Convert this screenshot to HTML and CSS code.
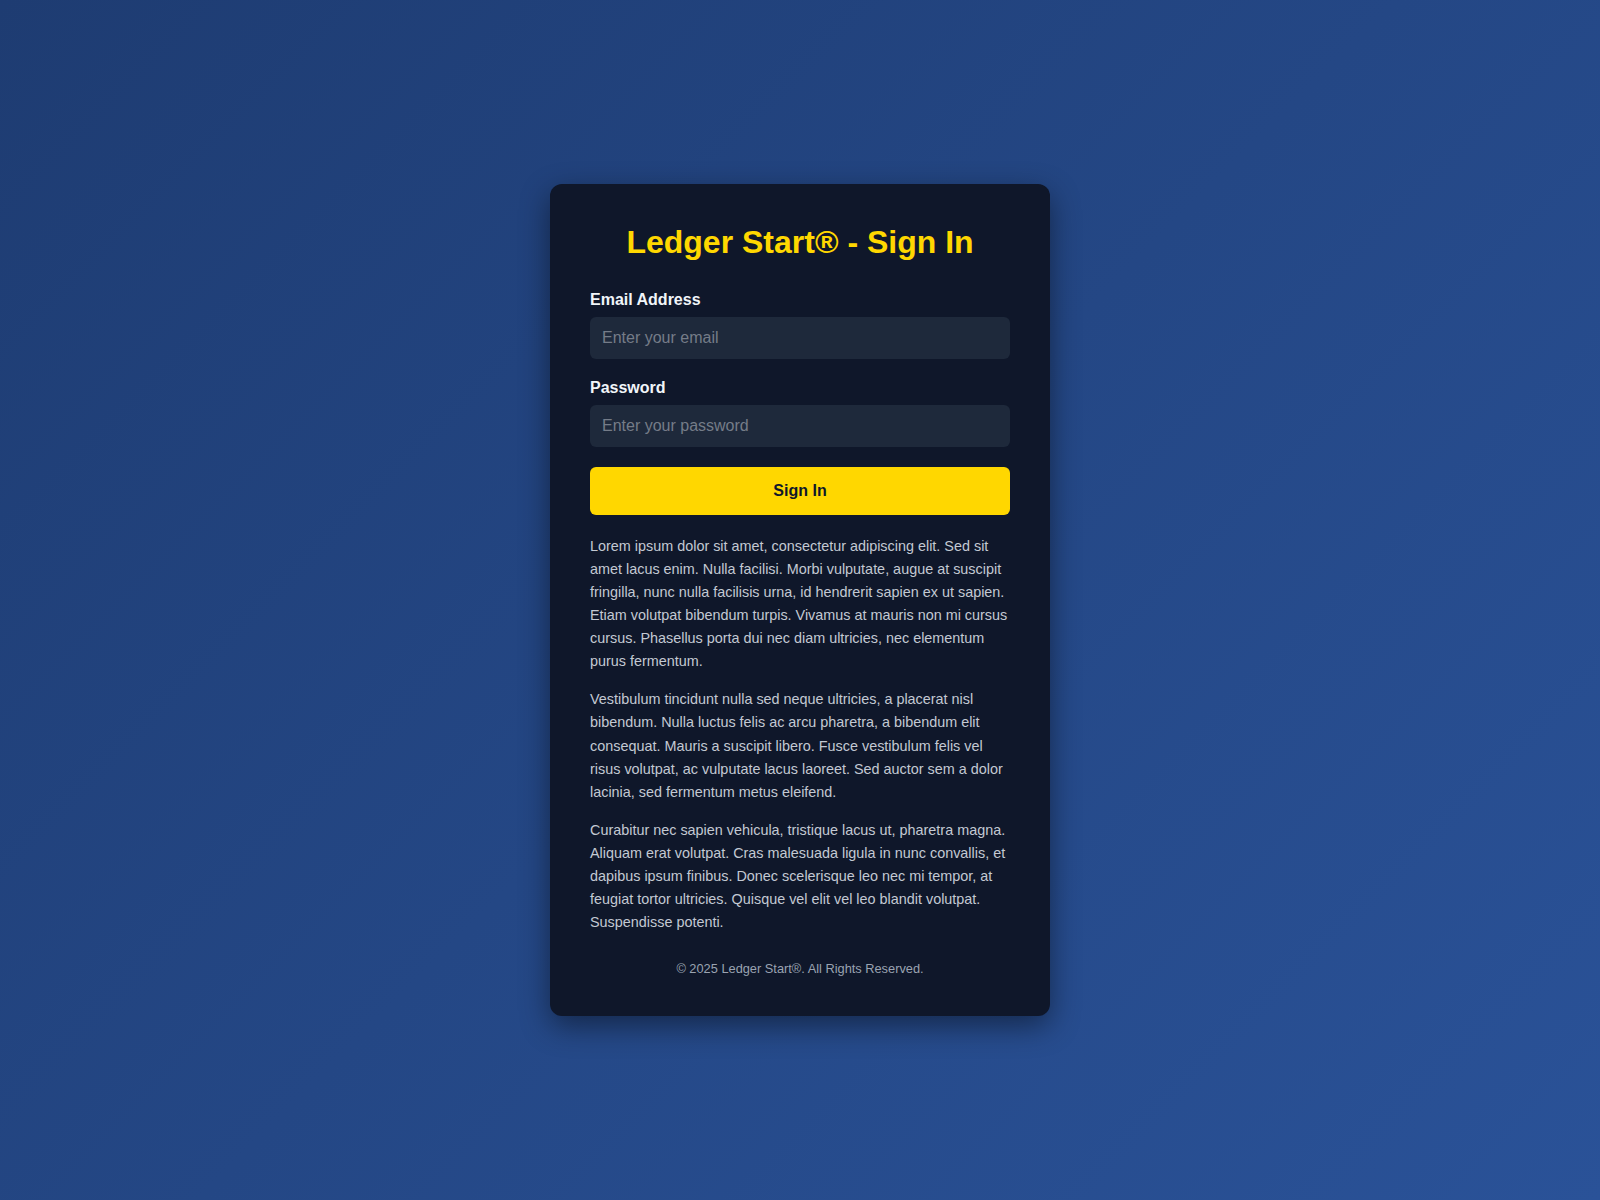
FILE: index.html
```html
<!DOCTYPE html>
<html lang="en">
<head>
    <meta charset="UTF-8">
    <meta name="viewport" content="width=device-width, initial-scale=1.0">
    <title>Ledger Start® - Sign In</title>
    <link rel="stylesheet" href="styles.css">
</head>
<body>
    <div class="login-container">
        <h1>Ledger Start® - Sign In</h1>
        <form class="login-form">
            <div class="form-group">
                <label for="email">Email Address</label>
                <input type="email" id="email" placeholder="Enter your email">
            </div>
            <div class="form-group">
                <label for="password">Password</label>
                <input type="password" id="password" placeholder="Enter your password">
            </div>
            <button type="submit">Sign In</button>
        </form>

        <div class="info-text">
            <p>Lorem ipsum dolor sit amet, consectetur adipiscing elit. Sed sit amet lacus enim. Nulla facilisi. Morbi vulputate, augue at suscipit fringilla, nunc nulla facilisis urna, id hendrerit sapien ex ut sapien. Etiam volutpat bibendum turpis. Vivamus at mauris non mi cursus cursus. Phasellus porta dui nec diam ultricies, nec elementum purus fermentum.</p>
            <p>Vestibulum tincidunt nulla sed neque ultricies, a placerat nisl bibendum. Nulla luctus felis ac arcu pharetra, a bibendum elit consequat. Mauris a suscipit libero. Fusce vestibulum felis vel risus volutpat, ac vulputate lacus laoreet. Sed auctor sem a dolor lacinia, sed fermentum metus eleifend.</p>
            <p>Curabitur nec sapien vehicula, tristique lacus ut, pharetra magna. Aliquam erat volutpat. Cras malesuada ligula in nunc convallis, et dapibus ipsum finibus. Donec scelerisque leo nec mi tempor, at feugiat tortor ultricies. Quisque vel elit vel leo blandit volutpat. Suspendisse potenti.</p>
        </div>

        <footer>
            &copy; 2025 Ledger Start®. All Rights Reserved.
        </footer>
    </div>
</body>
</html>
```

FILE: styles.css
```css
body {
    font-family: "Liberation Sans", Arial, sans-serif;
    background: linear-gradient(135deg, #1e3c72, #2a5298);
    margin: 0;
    padding: 0;
    min-height: 100vh;
    display: flex;
    align-items: center;
    justify-content: center;
}

.login-container {
    background-color: #0f172a;
    border-radius: 12px;
    padding: 40px;
    width: 500px;
    box-sizing: border-box;
    box-shadow: 0 10px 30px rgba(0, 0, 0, 0.45);
}

h1 {
    color: #ffd700;
    font-size: 32px;
    text-align: center;
    margin: 0 0 30px;
}

.form-group {
    margin-bottom: 20px;
}

label {
    display: block;
    color: #f1f5f9;
    font-weight: bold;
    font-size: 16px;
    margin-bottom: 8px;
}

input {
    width: 100%;
    box-sizing: border-box;
    padding: 12px;
    font-family: inherit;
    font-size: 16px;
    background-color: #1e293b;
    color: #e2e8f0;
    border: none;
    border-radius: 6px;
    outline: none;
}

input::placeholder {
    color: #757c88;
}

button {
    width: 100%;
    padding: 15px;
    font-family: inherit;
    font-size: 16px;
    font-weight: bold;
    background-color: #ffd700;
    color: #0f172a;
    border: none;
    border-radius: 6px;
    cursor: pointer;
}

.info-text {
    margin-top: 20px;
}

.info-text p {
    color: #c3c9d3;
    font-size: 14.4px;
    line-height: 1.6;
    margin: 0 0 15px;
}

footer {
    color: #9aa3b1;
    font-size: 12.8px;
    text-align: center;
    margin-top: 27px;
}
```
